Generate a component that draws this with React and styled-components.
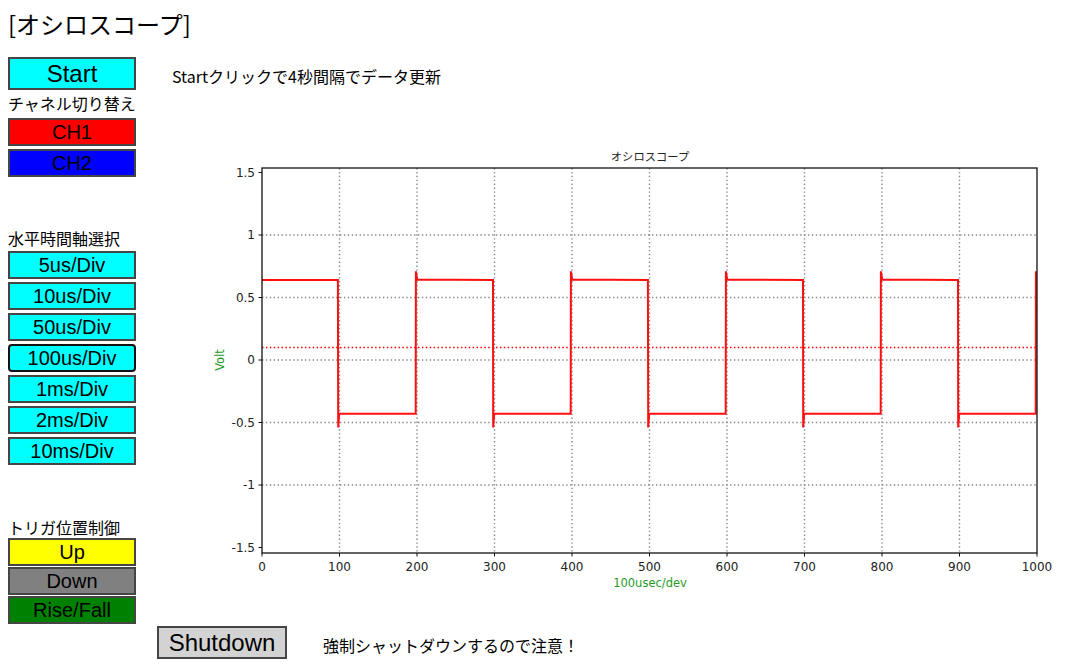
import styled, { createGlobalStyle } from "styled-components";

const GlobalStyle = createGlobalStyle`
  body {
    margin: 8px;
    background: #fff;
    color: #000;
    font-family: "Noto Sans CJK JP", "Noto Sans", sans-serif;
  }
`;

const Title = styled.h1`
  margin: 0;
  font-size: 24px;
  font-weight: 400;
  line-height: 32px;
  height: 32px;
`;

const Main = styled.div`
  display: grid;
  grid-template-columns: 128px 1fr;
  margin-top: 17px;
`;

const Side = styled.div`
  display: flex;
  flex-direction: column;
`;

const Section = styled.div`
  display: flex;
  flex-direction: column;
  margin-top: ${(p) => p.$top || 0}px;
`;

const Label = styled.div`
  font-size: 16px;
  line-height: 22px;
  white-space: nowrap;
`;

const Stack = styled.div`
  display: flex;
  flex-direction: column;
  gap: ${(p) => p.$gap}px;
  margin-top: ${(p) => p.$top || 0}px;
`;

const Button = styled.button`
  box-sizing: border-box;
  width: ${(p) => p.$width || 128}px;
  height: ${(p) => p.$height || 28}px;
  padding: 0;
  border: 2px solid ${(p) => (p.$focused ? "#111" : "#454545")};
  border-radius: ${(p) => (p.$focused ? 4 : 0)}px;
  background: ${(p) => p.$bg};
  color: #000;
  font-family: "Liberation Sans", Arial, sans-serif;
  font-size: ${(p) => p.$size || 20}px;
  display: flex;
  align-items: center;
  justify-content: center;
  cursor: pointer;
`;

const Content = styled.div`
  padding-left: 36px;
`;

const Note = styled.div`
  font-size: 16px;
  line-height: 33px;
  padding-top: 3px;
`;

const Chart = styled.svg`
  display: block;
  margin-top: 47px;
  margin-left: 28px;
`;

const Footer = styled.div`
  display: flex;
  align-items: center;
  gap: 36px;
  margin-top: 2px;
  margin-left: 149px;
`;

const Warning = styled.span`
  font-size: 16px;
  padding-top: 4px;
`;

const X = (v) => 62 + v * 0.775;
const Y = (v) => 220 - 125 * v;

const signal = (() => {
  const pts = [[0, 0.64]];
  for (let k = 0; k < 5; k++) {
    const b = k * 200;
    pts.push([b + 98, 0.64], [b + 98.3, -0.54], [b + 99.6, -0.43]);
    pts.push([b + 198.3, -0.43], [b + 198.6, 0.71]);
    if (k < 4) pts.push([b + 200.2, 0.645]);
  }
  return pts.map(([x, y], i) => `${i ? "L" : "M"}${X(x).toFixed(1)},${Y(y).toFixed(1)}`).join(" ");
})();

const yTicks = [1.5, 1, 0.5, 0, -0.5, -1, -1.5];
const xTicks = [0, 100, 200, 300, 400, 500, 600, 700, 800, 900, 1000];
const chartFont = '"DejaVu Sans", "Noto Sans CJK JP", sans-serif';

const Scope = () => (
  <Chart width="860" height="455" viewBox="0 0 860 455">
    <text x="450" y="21" fontSize="11.3" textAnchor="middle" fill="#222" fontFamily={chartFont}>
      オシロスコープ
    </text>
    {xTicks.slice(1, -1).map((v) => (
      <line key={v} x1={X(v)} x2={X(v)} y1="28" y2="413" stroke="#888" strokeWidth="1.4" strokeDasharray="1.4 2.5" />
    ))}
    {[1, 0.5, 0, -0.5, -1].map((v) => (
      <line key={v} x1="62" x2="837" y1={Y(v)} y2={Y(v)} stroke="#888" strokeWidth="1.4" strokeDasharray="1.4 2.5" />
    ))}
    <line x1="62" x2="837" y1={Y(0.1)} y2={Y(0.1)} stroke="#ff0000" strokeWidth="1.5" strokeDasharray="1.5 2.4" />
    <path d={signal} fill="none" stroke="#ff1010" strokeWidth="2" />
    <rect x="62" y="28" width="775" height="385" fill="none" stroke="#111" strokeWidth="1.3" />
    {yTicks.map((v) => (
      <g key={v}>
        <line x1="58.5" x2="62" y1={Y(v)} y2={Y(v)} stroke="#111" />
        <text x="55" y={Y(v) + 4.3} fontSize="12" textAnchor="end" fill="#222" fontFamily={chartFont}>
          {v}
        </text>
      </g>
    ))}
    {xTicks.map((v) => (
      <g key={v}>
        <line x1={X(v)} x2={X(v)} y1="413" y2="416.5" stroke="#111" />
        <text x={X(v)} y="431" fontSize="12" textAnchor="middle" fill="#222" fontFamily={chartFont}>
          {v}
        </text>
      </g>
    ))}
    <text x="450" y="447" fontSize="11.5" textAnchor="middle" fill="#1f9a1f" fontFamily={chartFont}>
      100usec/dev
    </text>
    <text x="24" y="220" fontSize="11.5" textAnchor="middle" fill="#1f9a1f" fontFamily={chartFont} transform="rotate(-90 24 220)">
      Volt
    </text>
  </Chart>
);

const timebases = ["5us/Div", "10us/Div", "50us/Div", "100us/Div", "1ms/Div", "2ms/Div", "10ms/Div"];

const App = () => {
  return (
    <>
      <GlobalStyle />
      <Title>[オシロスコープ]</Title>
      <Main>
        <Side>
          <Button $bg="#00ffff" $height={33} $size={24}>
            Start
          </Button>
          <Section $top={2}>
            <Label>チャネル切り替え</Label>
            <Stack $gap={3} $top={4}>
              <Button $bg="#ff0000">CH1</Button>
              <Button $bg="#0000ff">CH2</Button>
            </Stack>
          </Section>
          <Section $top={50}>
            <Label>水平時間軸選択</Label>
            <Stack $gap={3} $top={2}>
              {timebases.map((t) => (
                <Button key={t} $bg="#00ffff" $focused={t === "100us/Div"}>
                  {t}
                </Button>
              ))}
            </Stack>
          </Section>
          <Section $top={51}>
            <Label>トリガ位置制御</Label>
            <Stack $gap={1}>
              <Button $bg="#ffff00">Up</Button>
              <Button $bg="#808080">Down</Button>
              <Button $bg="#008000">Rise/Fall</Button>
            </Stack>
          </Section>
        </Side>
        <Content>
          <Note>Startクリックで4秒間隔でデータ更新</Note>
          <Scope />
        </Content>
      </Main>
      <Footer>
        <Button $bg="#d3d3d3" $width={130} $height={33} $size={24}>
          Shutdown
        </Button>
        <Warning>強制シャットダウンするので注意！</Warning>
      </Footer>
    </>
  );
};

export default App;
